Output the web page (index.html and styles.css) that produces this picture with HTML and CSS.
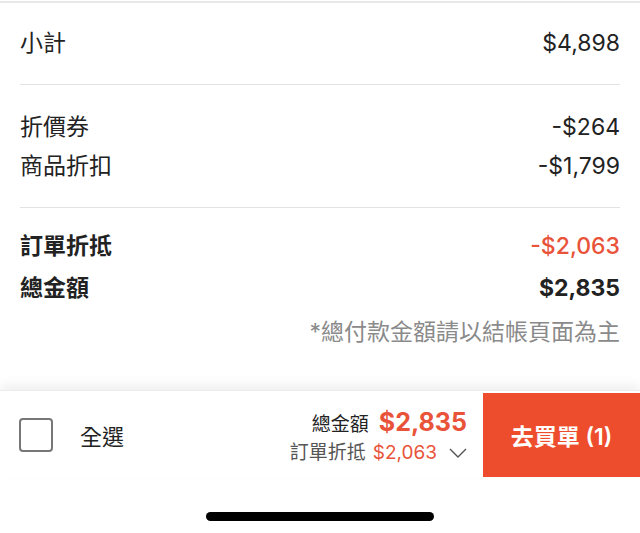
FILE: index.html
```html
<!DOCTYPE html>
<html lang="zh-Hant">
<head>
  <meta charset="UTF-8" />
  <title>購物車</title>
  <link rel="stylesheet" href="styles.css">
</head>
<body>
  <div class="summary">
    <div class="group group-first">
      <div class="row">
        <span>小計</span>
        <span>$4,898</span>
      </div>
    </div>

    <div class="group group-mid">
      <div class="row">
        <span>折價券</span>
        <span>-$264</span>
      </div>
      <div class="row">
        <span>商品折扣</span>
        <span>-$1,799</span>
      </div>
    </div>

    <div class="group group-last">
      <div class="row strong">
        <span>訂單折抵</span>
        <span class="red medium">-$2,063</span>
      </div>
      <div class="row strong">
        <span>總金額</span>
        <span>$2,835</span>
      </div>
      <p class="note">*總付款金額請以結帳頁面為主</p>
    </div>
  </div>

  <div class="checkout-bar">
    <label class="select-all">
      <span class="checkbox"></span>
      <span>全選</span>
    </label>

    <div class="totals">
      <div class="total-line">
        <span>總金額</span>
        <span class="big-price">$2,835</span>
      </div>
      <div class="discount-line">
        <span>訂單折抵</span>
        <span class="red">$2,063</span>
        <svg class="chevron" width="18" height="10" viewBox="0 0 18 10">
          <polyline points="1,1 9,9 17,1" fill="none" stroke="#555" stroke-width="1.4" />
        </svg>
      </div>
    </div>

    <button class="buy-btn">去買單 (1)</button>
  </div>

  <div class="home-area">
    <div class="home-indicator"></div>
  </div>
</body>
</html>
```

FILE: styles.css
```css
body {
  margin: 0;
  width: 640px;
  height: 533px;
  background: #fff;
  font-family: Inter, 'Noto Sans CJK TC', sans-serif;
  color: #222;
  overflow: hidden;
}

.summary {
  margin-top: 1px;
  border-top: 2px solid #e8e8e8;
  padding: 0 20px;
  height: 387px;
}

.group {
  display: flex;
  flex-direction: column;
  gap: 7px;
  border-bottom: 1px solid #e3e3e3;
}

.group-first {
  padding: 24px 0 25px;
}

.group-mid {
  padding: 26px 0 25px;
}

.group-last {
  padding: 22px 0 0;
  gap: 10px;
  border-bottom: none;
}

.row {
  display: flex;
  justify-content: space-between;
  align-items: center;
  height: 32px;
  font-size: 23px;
  line-height: 32px;
}

.row.strong {
  font-weight: 700;
}

.red {
  color: #e8533a;
}

.medium {
  font-weight: 500;
}

.note {
  margin: 2px 0 0;
  text-align: right;
  font-size: 23px;
  line-height: 32px;
  color: #8a8a8a;
}

.checkout-bar {
  display: flex;
  align-items: center;
  height: 84px;
  padding-top: 2px;
  background: #fff;
  box-shadow: 0 -6px 10px rgba(0,0,0,0.06);
  border-top: 1px solid #ececec;
}

.select-all {
  display: flex;
  align-items: center;
  gap: 27px;
  margin-left: 19px;
  font-size: 22px;
}

.checkbox {
  width: 30px;
  height: 30px;
  border: 2px solid #777;
  border-radius: 4px;
}

.totals {
  margin-left: auto;
  margin-right: 16px;
  padding-top: 2px;
  display: flex;
  flex-direction: column;
  align-items: flex-end;
}

.total-line {
  display: flex;
  align-items: baseline;
  gap: 10px;
  font-size: 19px;
  line-height: 30px;
}

.big-price {
  font-size: 25px;
  font-weight: 700;
  color: #e8533a;
}

.discount-line {
  display: flex;
  align-items: center;
  gap: 7px;
  font-size: 19px;
  line-height: 26px;
  color: #555;
}

.chevron {
  margin-left: 5px;
}

.buy-btn {
  width: 157px;
  height: 84px;
  border: none;
  background: #ee4d2d;
  color: #fff;
  font-family: Inter, 'Noto Sans CJK TC', sans-serif;
  font-size: 23px;
  font-weight: 600;
}

.home-area {
  display: flex;
  justify-content: center;
  padding-top: 35px;
}

.home-indicator {
  width: 228px;
  height: 9px;
  border-radius: 5px;
  background: #000;
}
```
